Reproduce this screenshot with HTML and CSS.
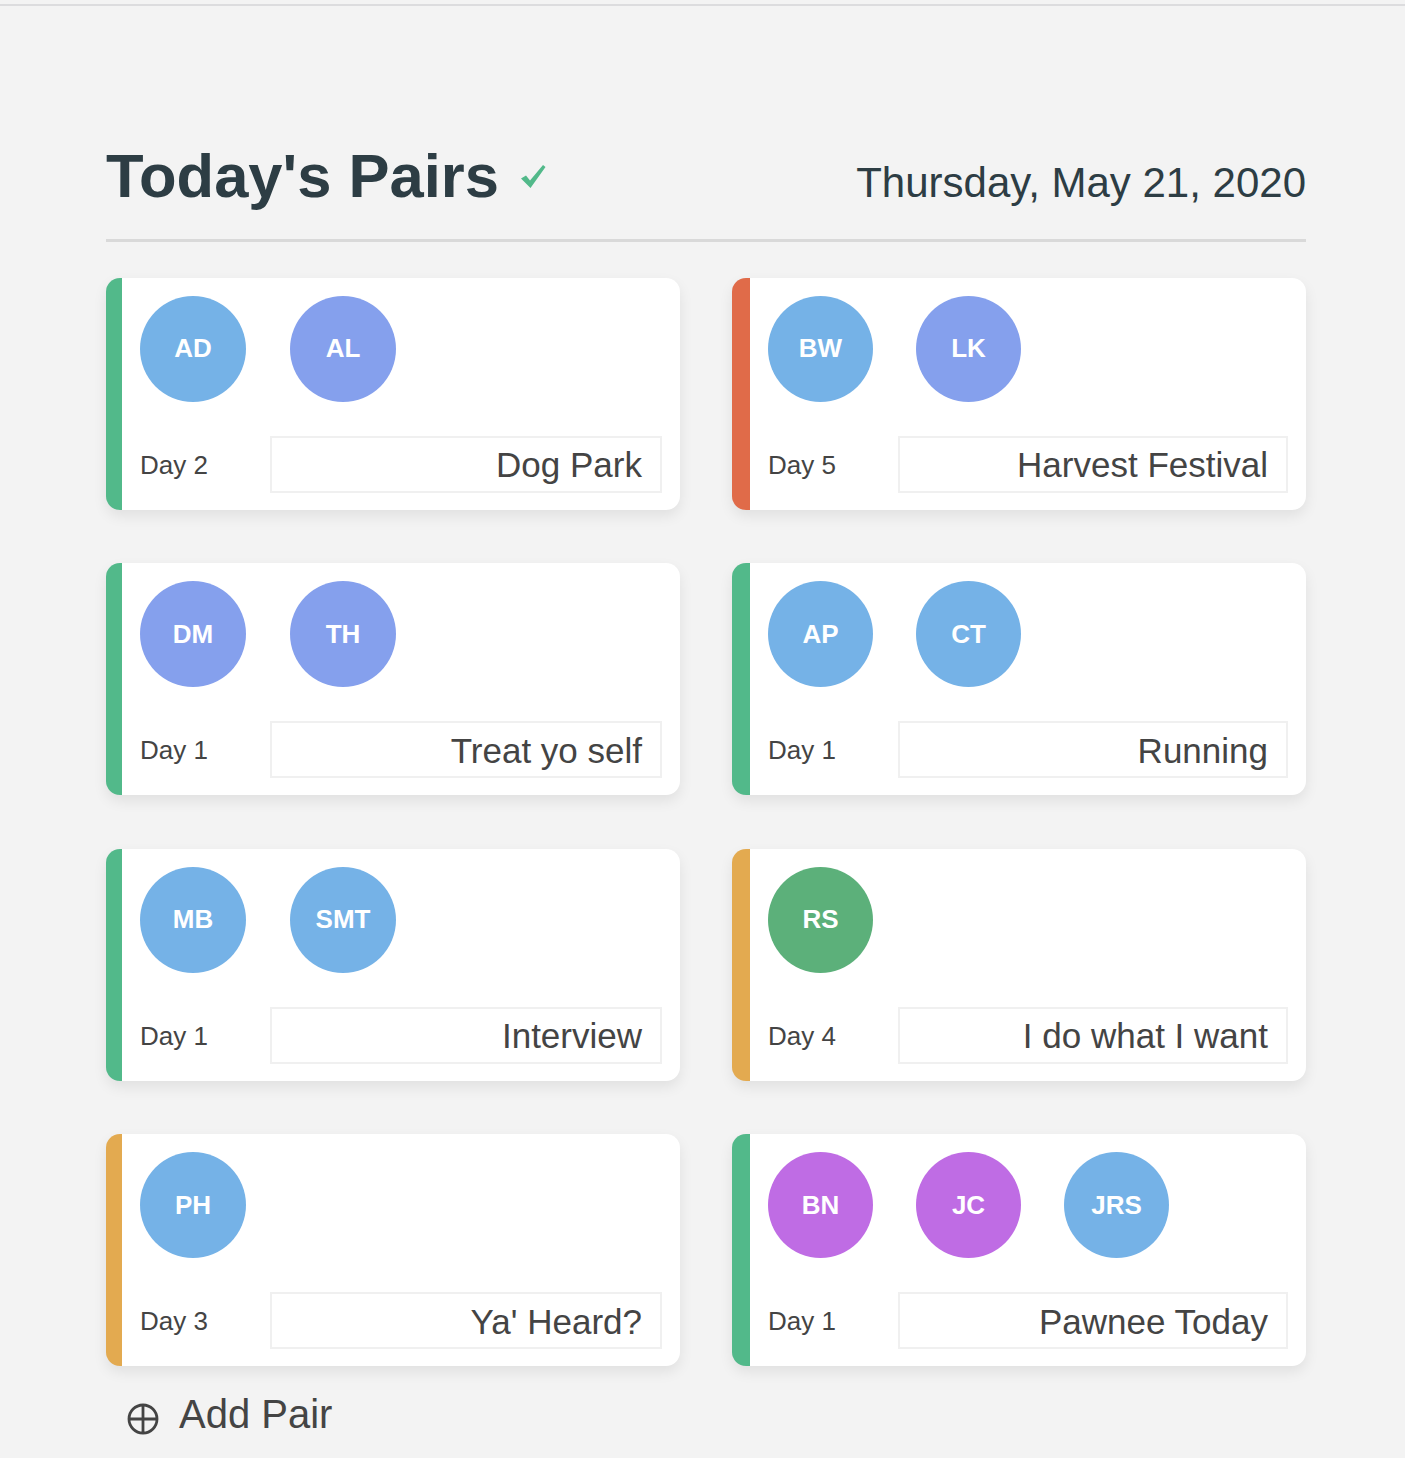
FILE: index.html
```html
<!DOCTYPE html>
<html lang="en">
<head>
<meta charset="utf-8">
<title>Today's Pairs</title>
<link rel="stylesheet" href="styles.css">
</head>
<body>
<div class="topline"></div>
<main class="page">
  <header class="header">
    <h1 class="title">Today's Pairs
      <svg class="check" width="26" height="25" viewBox="0 0 26 25" aria-hidden="true"><path d="M1 14.5 L6 11.5 L10 16.5 L23 1 L25.5 3 L10.5 24 Z" fill="#52b98a"/></svg>
    </h1>
    <div class="date">Thursday, May 21, 2020</div>
  </header>

  <section class="grid">
    <article class="card green">
      <div class="avatars"><span class="avatar blue">AD</span><span class="avatar peri">AL</span></div>
      <div class="bottom"><span class="day">Day 2</span><div class="topic">Dog Park</div></div>
    </article>
    <article class="card orange">
      <div class="avatars"><span class="avatar blue">BW</span><span class="avatar peri">LK</span></div>
      <div class="bottom"><span class="day">Day 5</span><div class="topic">Harvest Festival</div></div>
    </article>
    <article class="card green">
      <div class="avatars"><span class="avatar peri">DM</span><span class="avatar peri">TH</span></div>
      <div class="bottom"><span class="day">Day 1</span><div class="topic">Treat yo self</div></div>
    </article>
    <article class="card green">
      <div class="avatars"><span class="avatar blue">AP</span><span class="avatar blue">CT</span></div>
      <div class="bottom"><span class="day">Day 1</span><div class="topic">Running</div></div>
    </article>
    <article class="card green">
      <div class="avatars"><span class="avatar blue">MB</span><span class="avatar blue">SMT</span></div>
      <div class="bottom"><span class="day">Day 1</span><div class="topic">Interview</div></div>
    </article>
    <article class="card yellow">
      <div class="avatars"><span class="avatar grn">RS</span></div>
      <div class="bottom"><span class="day">Day 4</span><div class="topic">I do what I want</div></div>
    </article>
    <article class="card yellow">
      <div class="avatars"><span class="avatar blue">PH</span></div>
      <div class="bottom"><span class="day">Day 3</span><div class="topic">Ya' Heard?</div></div>
    </article>
    <article class="card green">
      <div class="avatars"><span class="avatar purple">BN</span><span class="avatar purple">JC</span><span class="avatar blue">JRS</span></div>
      <div class="bottom"><span class="day">Day 1</span><div class="topic">Pawnee Today</div></div>
    </article>
  </section>

  <div class="add">
    <svg class="add-icon" width="32" height="32" viewBox="0 0 32 32" aria-hidden="true">
      <circle cx="16" cy="16" r="14" fill="none" stroke="#444" stroke-width="2.8"/>
      <path d="M16 3 V29 M3 16 H29" stroke="#444" stroke-width="2.8"/>
    </svg>
    <span class="add-text">Add Pair</span>
  </div>
</main>
</body>
</html>
```
FILE: styles.css
```css
html, body {
  margin: 0;
  padding: 0;
  background: #f3f3f3;
  font-family: "Liberation Sans", Arial, sans-serif;
}

.topline {
  margin-top: 4px;
  height: 2px;
  background: #dcdcde;
}

.page {
  width: 1200px;
  margin: 0 0 0 106px;
}

.header {
  display: flex;
  align-items: baseline;
  justify-content: space-between;
  padding-top: 139px;
  padding-bottom: 32px;
  border-bottom: 3px solid #d9d9d9;
}

.title {
  margin: 0;
  font-size: 61.5px;
  line-height: 1;
  font-weight: 700;
  color: #2d3d44;
  display: flex;
  align-items: baseline;
}

.check {
  margin-left: 21px;
  align-self: center;
  position: relative;
  top: 1px;
}

.date {
  font-size: 42px;
  line-height: 1;
  color: #2d3d44;
}

.grid {
  display: grid;
  grid-template-columns: 574px 574px;
  column-gap: 52px;
  row-gap: 53.5px;
  margin-top: 36px;
}

.card {
  box-sizing: border-box;
  height: 232px;
  background: #fff;
  border-radius: 14px;
  border-left: 16px solid #52b98a;
  padding: 18px 18px 17px 18px;
  box-shadow: 0 6px 14px rgba(0, 0, 0, 0.08);
  display: flex;
  flex-direction: column;
  justify-content: space-between;
}

.card:nth-child(even) {
  border-left-width: 18px;
}

.card:nth-child(even) .avatars {
  gap: 43px;
}

.card.green { border-left-color: #52b98a; }
.card.orange { border-left-color: #e06b49; }
.card.yellow { border-left-color: #e3aa50; }

.avatars {
  display: flex;
  gap: 44px;
}

.avatar {
  width: 106px;
  height: 106px;
  border-radius: 50%;
  display: flex;
  align-items: center;
  justify-content: center;
  color: #fff;
  font-weight: 700;
  font-size: 26px;
}

.card:nth-child(even) .avatar {
  width: 105px;
}

.avatar.blue { background: #75b2e7; }
.avatar.peri { background: #85a0ed; }
.avatar.grn { background: #5cb07a; }
.avatar.purple { background: #bf6ce4; }

.bottom {
  display: flex;
  align-items: center;
}

.day {
  width: 130px;
  flex: none;
  font-size: 26px;
  color: #444;
  padding-top: 2px;
}

.topic {
  flex: 1;
  box-sizing: border-box;
  height: 57px;
  border: 2px solid #f0f0f0;
  padding: 2px 18px 0;
  display: flex;
  align-items: center;
  justify-content: flex-end;
  font-size: 35px;
  color: #444;
}

.add {
  display: flex;
  align-items: center;
  margin-top: 27px;
  padding-left: 21px;
  gap: 20px;
}

.add-icon {
  margin-top: 10px;
}

.add-text {
  font-size: 40px;
  line-height: 1;
  color: #444;
}
```
